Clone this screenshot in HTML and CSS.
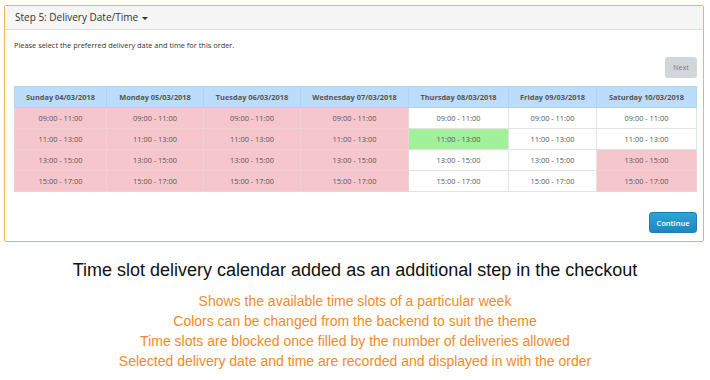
FILE: index.html
```html
<!DOCTYPE html>
<html lang="en">
<head>
    <meta charset="UTF-8">
    <meta name="viewport" content="width=device-width, initial-scale=1.0">
    <title>Delivery Date/Time</title>
    <link rel="stylesheet" href="styles.css">
</head>
<body>

<div class="panel">
    <div class="panel-heading">Step 5: Delivery Date/Time <span class="caret"></span></div>
    <div class="panel-body">
        <p class="intro">Please select the preferred delivery date and time for this order.</p>

        <div class="nav-row">
            <button type="button" class="btn-next">Next</button>
        </div>

        <table class="slots">
            <colgroup>
                <col class="col-sun">
                <col class="col-mon">
                <col class="col-tue">
                <col class="col-wed">
                <col class="col-thu">
                <col class="col-fri">
                <col class="col-sat">
            </colgroup>
            <thead>
                <tr>
                    <th>Sunday 04/03/2018</th>
                    <th>Monday 05/03/2018</th>
                    <th>Tuesday 06/03/2018</th>
                    <th>Wednesday 07/03/2018</th>
                    <th>Thursday 08/03/2018</th>
                    <th>Friday 09/03/2018</th>
                    <th>Saturday 10/03/2018</th>
                </tr>
            </thead>
            <tbody>
                <tr>
                    <td class="full">09:00 - 11:00</td>
                    <td class="full">09:00 - 11:00</td>
                    <td class="full">09:00 - 11:00</td>
                    <td class="full">09:00 - 11:00</td>
                    <td>09:00 - 11:00</td>
                    <td>09:00 - 11:00</td>
                    <td>09:00 - 11:00</td>
                </tr>
                <tr>
                    <td class="full">11:00 - 13:00</td>
                    <td class="full">11:00 - 13:00</td>
                    <td class="full">11:00 - 13:00</td>
                    <td class="full">11:00 - 13:00</td>
                    <td class="selected">11:00 - 13:00</td>
                    <td>11:00 - 13:00</td>
                    <td>11:00 - 13:00</td>
                </tr>
                <tr>
                    <td class="full">13:00 - 15:00</td>
                    <td class="full">13:00 - 15:00</td>
                    <td class="full">13:00 - 15:00</td>
                    <td class="full">13:00 - 15:00</td>
                    <td>13:00 - 15:00</td>
                    <td>13:00 - 15:00</td>
                    <td class="full">13:00 - 15:00</td>
                </tr>
                <tr>
                    <td class="full">15:00 - 17:00</td>
                    <td class="full">15:00 - 17:00</td>
                    <td class="full">15:00 - 17:00</td>
                    <td class="full">15:00 - 17:00</td>
                    <td>15:00 - 17:00</td>
                    <td>15:00 - 17:00</td>
                    <td class="full">15:00 - 17:00</td>
                </tr>
            </tbody>
        </table>

        <div class="nav-row bottom">
            <button type="button" class="btn-continue">Continue</button>
        </div>
    </div>
</div>

<h3 class="caption">Time slot delivery calendar added as an additional step in the checkout</h3>

<ul class="features">
    <li>Shows the available time slots of a particular week</li>
    <li>Colors can be changed from the backend to suit the theme</li>
    <li>Time slots are blocked once filled by the number of deliveries allowed</li>
    <li>Selected delivery date and time are recorded and displayed in with the order</li>
</ul>

</body>
</html>
```

FILE: styles.css
```css
body {
    margin: 0;
    background-color: #fff;
    font-family: 'Open Sans', 'DejaVu Sans', sans-serif;
}

.panel {
    width: 698px;
    height: 235px;
    margin: 5px 0 0 4px;
    border: 1px solid #f0b553;
    border-radius: 2px;
    background-color: #fff;
}

.panel-heading {
    height: 23px;
    line-height: 23px;
    padding: 0 10px;
    background-color: #f5f5f5;
    border-bottom: 1px solid #dedede;
    color: #333;
    font-size: 10px;
}

.caret {
    display: inline-block;
    width: 0;
    height: 0;
    margin-left: 1px;
    vertical-align: middle;
    border-top: 3px solid #333;
    border-left: 3px solid transparent;
    border-right: 3px solid transparent;
}

.panel-body {
    padding: 0 6px 0 9px;
}

.intro {
    margin: 0;
    padding-top: 10px;
    height: 13px;
    line-height: 10px;
    font-size: 7.4px;
    color: #333;
}

.nav-row {
    display: flex;
    justify-content: flex-end;
    padding-top: 4px;
    height: 29px;
}

.nav-row.bottom {
    padding-top: 20px;
}

.btn-next {
    width: 32px;
    height: 21px;
    padding: 0;
    border: none;
    border-radius: 3px;
    background-color: #d2d6db;
    color: #777;
    font-family: inherit;
    font-size: 7px;
}

.btn-continue {
    width: 48px;
    height: 21px;
    padding: 0;
    border: 1px solid #1f7fae;
    border-radius: 3px;
    background: linear-gradient(#2fa4d6, #1e87bd);
    color: #fff;
    font-family: inherit;
    font-size: 7.5px;
    font-weight: 600;
}

.slots {
    width: 682px;
    border-collapse: collapse;
    table-layout: fixed;
}

.col-sun { width: 92px; }
.col-mon { width: 97px; }
.col-tue { width: 97px; }
.col-wed { width: 108px; }
.col-thu { width: 100px; }
.col-fri { width: 88px; }
.col-sat { width: 100px; }

.slots th,
.slots td {
    height: 20px;
    padding: 0;
    text-align: center;
    font-size: 7.4px;
    color: #555;
    border: 1px solid #e3e3e3;
}

.slots th {
    background-color: #bcdcfb;
    font-weight: 700;
    border-color: #b0d2f3;
}

.slots td.full {
    background-color: #f5c6cc;
    border-color: #efd2d6;
}

.slots td.selected {
    background-color: #a0f09c;
}

.caption {
    margin: 18px 0 0;
    text-align: center;
    font-family: 'Liberation Sans', Arial, sans-serif;
    font-size: 18px;
    font-weight: normal;
    color: #111;
}

.features {
    list-style: none;
    margin: 10px 0 0;
    padding: 0;
    text-align: center;
    font-family: 'Liberation Sans', Arial, sans-serif;
    font-size: 14px;
    line-height: 20px;
    color: #f28a2a;
}
```
